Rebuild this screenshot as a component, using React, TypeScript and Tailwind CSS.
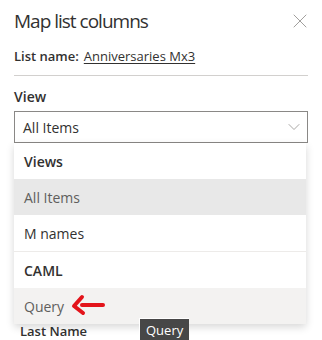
import { ChevronDown, X } from "lucide-react";

const MenuHeader = ({ label }: { label: string }) => (
    <div className="h-9 flex items-center px-[10px] text-[14px] font-semibold text-[#323130]">{label}</div>
);

const MenuItem = ({ label, bg, color, children }: { label: string; bg: string; color: string; children?: React.ReactNode }) => (
    <div className={`h-9 flex items-center gap-x-[5px] px-[10px] text-[14px] ${bg} ${color}`}>
        <span>{label}</span>
        {children}
    </div>
);

// red annotation arrow pointing at "Query"
const RedArrow = () => (
    <svg width="36" height="24" viewBox="0 0 36 24">
        <path d="M34 11 H13" stroke="#e3141b" strokeWidth="4" strokeLinecap="round" fill="none" />
        <path d="M13 3 L5 12 L14 19" stroke="#e3141b" strokeWidth="4" strokeLinecap="round" strokeLinejoin="round" fill="none" />
    </svg>
);

export default function App() {
    return (
        <div className="relative w-[322px] h-[340px] overflow-hidden bg-white font-['Open_Sans',sans-serif] text-[#323130]">
            <div className="flex items-center justify-between pl-[14px] pr-[10px] pt-[7px] h-[34px]">
                <h1 className="text-[19px] leading-[28px] font-medium tracking-[-1px]">Map list columns</h1>
                <X className="w-6 h-6 text-[#a19f9d]" strokeWidth={1} />
            </div>
            <div className="px-[14px] pt-[12px] flex gap-x-[5px] text-[13px] leading-[20px]">
                <span className="font-semibold">List name:</span>
                <a className="underline underline-offset-2">Anniversaries Mx3</a>
            </div>
            <div className="mx-[14px] mt-[9px] border-t border-[#d2d0ce]" />
            <div className="px-[14px] pt-[11px]">
                <p className="text-[14px] leading-[20px] font-semibold">View</p>
                <div className="mt-[4px] h-[32px] border border-[#8a8886] flex items-center justify-between pl-[8px] pr-[3px] text-[14px]">
                    <span>All Items</span>
                    <ChevronDown className="w-5 h-5 text-[#a19f9d]" strokeWidth={1.1} />
                </div>
            </div>
            <div className="px-[20px] pt-[178px] text-[13px] font-semibold leading-[20px]">Last Name</div>

            <div className="absolute left-[14px] top-[143px] w-[292px] bg-white shadow-[0_3px_8px_rgba(0,0,0,0.16)]">
                <MenuHeader label="Views" />
                <MenuItem label="All Items" bg="bg-[#e8e8e8]" color="text-[#605e5c]" />
                <MenuItem label="M names" bg="bg-white" color="text-[#323130]" />
                <div className="border-t border-[#edebe9]" />
                <MenuHeader label="CAML" />
                <MenuItem label="Query" bg="bg-[#f3f2f1]" color="text-[#605e5c]">
                    <RedArrow />
                </MenuItem>
            </div>

            <div className="absolute left-[139px] top-[318px] h-[24px] px-[6px] flex items-center bg-[#474747] border-l border-t border-white text-white text-[13px]">
                Query
            </div>
        </div>
    );
}
